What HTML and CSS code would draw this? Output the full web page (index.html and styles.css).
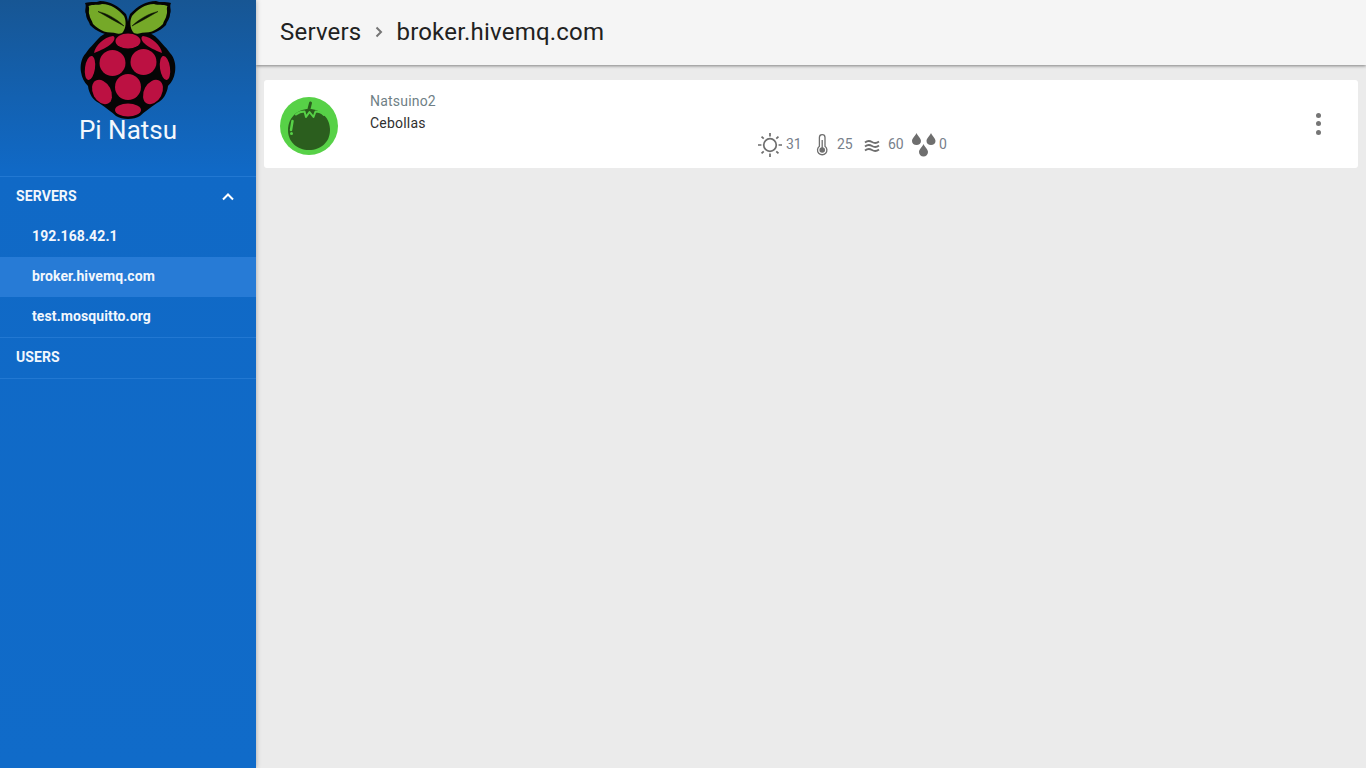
FILE: index.html
```html
<!DOCTYPE html>
<html lang="en">
<head>
<meta charset="utf-8">
<title>Pi Natsu</title>
<link rel="stylesheet" href="styles.css">
</head>
<body>
<div class="app">
  <aside class="sidebar">
    <header class="brand">
      <svg class="logo" viewBox="0 0 96 120" width="96" height="120" aria-hidden="true">
        <g class="leaf-out">
          <path d="M47 36C49 30 49 22 46 14 38 6 30 1 20 1 16 3 11 1 5 3 7 7 4 10 6 14 6 19 9 21 10 25 13 28 17 31 22 33 27 35 33 35 39 36Z"/>
          <path d="M49 36C47 30 47 22 50 14 58 6 66 1 76 1 80 3 85 1 91 3 89 7 92 10 90 14 90 19 87 21 86 25 83 28 79 31 74 33 69 35 63 35 57 36Z"/>
          <path d="M48 29C60 29 72 32 78 39 84 46 86 47 90 53 95 58 96 66 95 72 94 78 92 82 88 86 87 94 83 100 77 103 70 108 64 112 60 116 54 120 42 120 36 116 32 112 26 108 19 103 13 100 9 94 8 86 4 82 2 78 1 72 0 66 1 58 6 53 10 47 12 46 18 39 24 32 36 29 48 29Z"/>
        </g>
        <path class="leaf" d="M43 32C46 28 46.500 21 44 16 38 9 31 4 22 4 18 5.500 13 4 8.500 6 10 9 8 11.500 9.500 15 10 19 12 20 13 24 16 27 20 30 24 31.500 28 33 33 32 37 33.500 40 34 42 33.500 43 32Z"/>
        <path class="leaf" d="M53 32C50 28 49.500 21 52 16 58 9 65 4 74 4 78 5.500 83 4 87.500 6 86 9 88 11.500 86.500 15 86 19 84 20 83 24 80 27 76 30 72 31.500 68 33 63 32 59 33.500 56 34 54 33.500 53 32Z"/>
        <path class="vein" d="M18 11.500C27 13.500 36 18.500 44 26 35 21.500 27 16.500 18 11.500Z"/>
        <path class="vein" d="M78 11.500C69 13.500 60 18.500 52 26 61 21.500 69 16.500 78 11.500Z"/>
        <g class="seed">
          <ellipse cx="48" cy="41" rx="12.500" ry="7.500"/>
          <path d="M14 53C15 46 24 37 33 36 36 37 34 41 32 43 27 48 21 50 14 53Z"/>
          <path d="M82 53C81 46 72 37 63 36 60 37 62 41 64 43 69 48 75 50 82 53Z"/>
          <circle cx="32.500" cy="63" r="13"/>
          <circle cx="63.500" cy="62" r="13"/>
          <ellipse cx="10" cy="68" rx="5" ry="12" transform="rotate(8 10 68)"/>
          <ellipse cx="85" cy="68" rx="5" ry="12" transform="rotate(-8 85 68)"/>
          <circle cx="48" cy="87" r="13"/>
          <ellipse cx="22" cy="92" rx="9" ry="13" transform="rotate(-28 22 92)"/>
          <ellipse cx="73" cy="92" rx="9" ry="13" transform="rotate(28 73 92)"/>
          <ellipse cx="48" cy="110" rx="13" ry="6.500"/>
        </g>
      </svg>
      <div class="brand-name">Pi Natsu</div>
    </header>
    <nav class="nav">
      <div class="nav-group">
        <div class="nav-head">
          <span>SERVERS</span>
          <svg class="chev" viewBox="0 0 14 9" width="14" height="9" aria-hidden="true"><path d="M2 7.500 7 2.500 12 7.500"/></svg>
        </div>
        <a class="nav-sub">192.168.42.1</a>
        <a class="nav-sub active">broker.hivemq.com</a>
        <a class="nav-sub">test.mosquitto.org</a>
      </div>
      <div class="nav-group">
        <div class="nav-head"><span>USERS</span></div>
      </div>
    </nav>
  </aside>
  <div class="main">
    <header class="topbar">
      <span>Servers</span>
      <svg class="crumb" viewBox="0 0 10 12" width="10" height="12" aria-hidden="true"><path d="M2.500 1.500 7 6 2.500 10.500"/></svg>
      <span>broker.hivemq.com</span>
    </header>
    <section class="content">
      <article class="card">
        <div class="avatar">
          <svg viewBox="0 0 58 58" width="58" height="58" aria-hidden="true">
            <circle class="av-bg" cx="29" cy="29" r="29"/>
            <path class="av-dark" d="M29 12C42 12 50 22 50 33 50 45 41 53 29 53 17 53 8 45 8 33 8 22 16 12 29 12Z"/>
            <path class="av-stem" d="M28.500 14 30.500 6"/>
            <path class="av-line" d="M16 17.500C19 15 22 14.500 24.500 14.500L26 20 29.500 15 33.500 20 35.500 14.500C39 14.500 41.500 15.500 44 18"/>
            <path class="av-mark" d="M12.500 24 11 33"/>
            <circle class="av-dot" cx="11.500" cy="36.500" r="1.500"/>
          </svg>
        </div>
        <div class="info">
          <div class="name">Natsuino2</div>
          <div class="crop">Cebollas</div>
        </div>
        <div class="metrics">
          <svg class="ic-sun" viewBox="1.500 1.500 21 21" width="24" height="24" aria-hidden="true">
            <circle cx="12" cy="12" r="5.500"/>
            <path d="M12 1.500V4.500M12 19.500V22.500M1.500 12H4.500M19.500 12H22.500M4.600 4.600 6.500 6.500M17.500 17.500 19.400 19.400M4.600 19.400 6.500 17.500M17.500 6.500 19.400 4.600"/>
          </svg>
          <span class="val v-sun">31</span>
          <svg class="ic-therm" viewBox="0 0 12 22" width="12" height="22" aria-hidden="true">
            <path class="t-o" d="M3.400 3.500A2.800 2.800 0 0 1 9 3.500V12.300A4.700 4.700 0 1 1 3.400 12.300Z"/>
            <circle class="t-f" cx="6.200" cy="16" r="2.800"/>
            <path class="t-o" d="M6.200 6V14"/>
          </svg>
          <span class="val v-therm">25</span>
          <svg class="ic-wave" viewBox="0 0 16 14" width="16" height="14" aria-hidden="true">
            <path d="M1 4.500C3.500 2.500 5.500 2.500 8 4 10.500 5.500 12.500 5.500 15 3.500M1 8.500C3.500 6.500 5.500 6.500 8 8 10.500 9.500 12.500 9.500 15 7.500M1 12.500C3.500 10.500 5.500 10.500 8 12 10.500 13.500 12.500 13.500 15 11.500"/>
          </svg>
          <span class="val v-wave">60</span>
          <svg class="ic-drops" viewBox="0 0 24 26" width="24" height="26" aria-hidden="true">
            <path d="M4.500 1C5.500 4 9 6 9 9 9 11.500 7 13 4.500 13 2 13 0 11.500 0 9 0 6 3.500 4 4.500 1Z"/>
            <path d="M19 1C20 4 23.500 6 23.500 9 23.500 11.500 21.500 13 19 13 16.500 13 14.500 11.500 14.500 9 14.500 6 18 4 19 1Z"/>
            <path d="M11.500 12C12.500 15 16 17 16 20 16 22.500 14 24.500 11.500 24.500 9 24.500 7 22.500 7 20 7 17 10.500 15 11.500 12Z"/>
          </svg>
          <span class="val v-drops">0</span>
        </div>
        <div class="more" aria-label="More"><i></i><i></i><i></i></div>
      </article>
    </section>
  </div>
</div>
</body>
</html>
```
FILE: styles.css
```css
* { box-sizing: border-box; }
html, body { margin: 0; height: 100%; }
body { font-family: Roboto, "Liberation Sans", sans-serif; background: #ebebeb; color: #212121; overflow: hidden; }
.app { display: flex; height: 768px; }

.sidebar {
  width: 256px; flex: none; color: #fff; z-index: 2;
  background: linear-gradient(180deg, #175694 0, #1069c6 170px, #106bc9 100%);
  box-shadow: 0 0 5px rgba(0,0,0,.3);
}
.brand { height: 177px; border-bottom: 1px solid #2278d2; display: flex; flex-direction: column; align-items: center; }
.logo { display: block; flex: none; }
.brand-name { font-size: 26px; line-height: 28px; margin-top: -4px; color: #f4f8fd; }
.leaf-out { fill: #050505; }
.leaf { fill: #75a928; }
.vein { fill: #0c1405; stroke: #0c1405; stroke-width: .5; }
.seed { fill: #bc1142; }

.nav-group { border-bottom: 1px solid #2278d2; }
.nav-head, .nav-sub { display: flex; align-items: center; height: 40px; padding-bottom: 2px; font-size: 14px; font-weight: 700; color: #f2f7fd; letter-spacing: .1px; }
.nav-head { justify-content: space-between; padding-left: 16px; padding-right: 21px; }
.nav-sub { padding-left: 32px; }
.nav-sub.active { background: #277bd6; }
.chev { fill: none; stroke: #fff; stroke-width: 2; }

.main { flex: 1; min-width: 0; display: flex; flex-direction: column; }
.topbar {
  height: 65px; flex: none; display: flex; align-items: center; gap: 12.500px;
  padding: 0 24px 2px; background: #f5f5f5; font-size: 24px; color: #212121;
  box-shadow: 0 1px 3px rgba(0,0,0,.45); z-index: 1; letter-spacing: .2px;
}
.crumb { fill: none; stroke: #757575; stroke-width: 2; }
.content { padding: 15px 8px 0; }
.card {
  position: relative; height: 88px; background: #fff; border-radius: 3px;
  display: flex; padding-left: 16px;
}
.avatar { width: 58px; height: 58px; margin-top: 17px; flex: none; }
.avatar svg { display: block; }
.av-bg { fill: #57d147; }
.av-dark { fill: #2b5e1e; }
.av-stem { fill: none; stroke: #2b5e1e; stroke-width: 3; stroke-linecap: round; }
.av-line { fill: none; stroke: #57d147; stroke-width: 2; stroke-linejoin: round; stroke-linecap: round; }
.av-mark { fill: none; stroke: #57d147; stroke-width: 2.500; stroke-linecap: round; }
.av-dot { fill: #57d147; }
.info { width: 420px; flex: none; padding: 14px 0 0 32px; font-size: 14px; line-height: 15px; letter-spacing: .2px; }
.name { color: #6f7f86; }
.crop { color: #2f2f2f; margin-top: 7px; }

.metrics { display: flex; align-items: center; height: 26px; margin-top: 52px; font-size: 14px; color: #78808a; }
.metrics svg { display: block; flex: none; }
.val { line-height: 24px; margin-bottom: 2px; }
.v-sun { margin-left: 4px; width: 30px; }
.v-therm { margin-left: 9px; width: 27px; }
.v-wave { margin-left: 8px; width: 24px; }
.v-drops { margin-left: 3px; }
.ic-sun { fill: none; stroke: #6e6e6e; stroke-width: 1.500; }
.t-o { fill: none; stroke: #6e6e6e; stroke-width: 1.300; }
.t-f { fill: #6e6e6e; }
.ic-wave { fill: none; stroke: #6e6e6e; stroke-width: 1.800; }
.ic-drops { fill: #6e6e6e; }

.more { position: absolute; right: 37px; top: 33px; display: flex; flex-direction: column; gap: 3.300px; }
.more i { display: block; width: 5px; height: 5px; border-radius: 50%; background: #757575; }
```
